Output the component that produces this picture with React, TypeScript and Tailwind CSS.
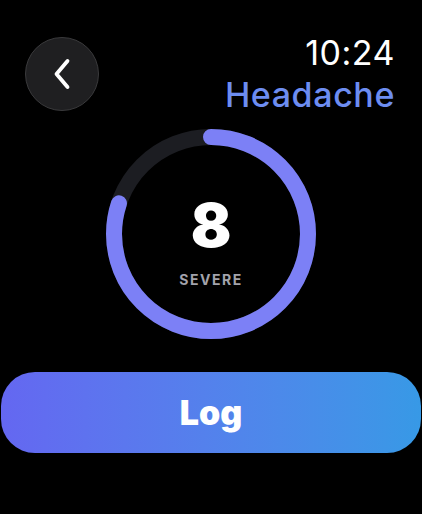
export default function App() {
  const severity = 8;
  const r = 97;
  const circ = 2 * Math.PI * r;
  const progress = (severity / 10) * circ;

  return (
    <div
      className="w-[422px] h-[514px] bg-black text-white overflow-hidden flex flex-col"
      style={{ fontFamily: "Inter, 'Noto Sans', sans-serif" }}
    >
      {/* header */}
      <div className="flex items-start justify-between pl-[25px] pr-[27px] pt-[37px]">
        <button className="w-[74px] h-[74px] rounded-full bg-[#1f1f21] border-[1.5px] border-[#3a3a3c] flex items-center justify-center">
          <svg width="22" height="34" viewBox="0 0 22 34" fill="none">
            <path d="M16.5 4 L5.5 17 L16.5 30" stroke="white" strokeWidth="3.8" strokeLinecap="round" strokeLinejoin="round" />
          </svg>
        </button>
        <div className="flex flex-col items-end -mt-[4px]">
          <span className="text-[34px] leading-[40px] font-normal tracking-[0.5px] text-white">10:24</span>
          <span className="text-[34px] leading-[42px] font-medium tracking-[0.6px] text-[#6d8df1] mt-[1px]">Headache</span>
        </div>
      </div>

      {/* ring */}
      <div className="flex justify-center mt-[13px]">
        <div className="relative w-[210px] h-[210px]">
          <svg width="210" height="210" viewBox="0 0 210 210">
            <circle cx="105" cy="105" r={r} fill="none" stroke="#1c1d22" strokeWidth="16" />
            <circle
              cx="105"
              cy="105"
              r={r}
              fill="none"
              stroke="#7c80f6"
              strokeWidth="16"
              strokeLinecap="round"
              strokeDasharray={`${progress} ${circ}`}
              transform="rotate(-90 105 105)"
            />
          </svg>
          <div className="absolute inset-0 flex flex-col items-center pt-[67px]">
            <span className="text-[60px] leading-[58px] font-black text-white">{severity}</span>
            <span className="text-[14px] leading-[16px] font-bold tracking-[1.5px] text-[#a3a3ab] mt-[18px]">SEVERE</span>
          </div>
        </div>
      </div>

      {/* log button */}
      <div className="px-[1px] mt-[33px]">
        <button className="w-full h-[81px] rounded-[34px] bg-gradient-to-r from-[#6467f1] to-[#3799e6] flex items-center justify-center">
          <span className="text-[34px] font-black text-white">Log</span>
        </button>
      </div>
    </div>
  );
}
